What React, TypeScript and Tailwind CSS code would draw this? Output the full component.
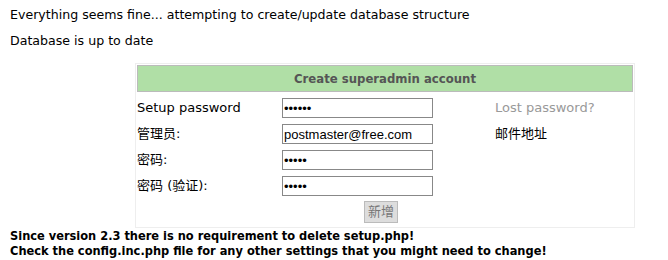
export default function App() {
  const rows = [
    { label: "Setup password", value: "123456", type: "password", note: "Lost password?", noteClass: "text-[#999]" },
    { label: "管理员:", value: "postmaster@free.com", type: "text", note: "邮件地址", noteClass: "text-black" },
    { label: "密码:", value: "12345", type: "password", note: "", noteClass: "" },
    { label: "密码 (验证):", value: "12345", type: "password", note: "", noteClass: "" },
  ];

  return (
    <main className="min-h-[260px] bg-white text-[13px] text-black font-['DejaVu_Sans','Noto_Sans_CJK_SC',sans-serif]">
      <div className="px-[10px] pt-[7px] text-[12.6px]">
        <p className="leading-[16px]">Everything seems fine... attempting to create/update database structure</p>
        <p className="mt-[10px] leading-[16px]">Database is up to date</p>
      </div>

      {/* setup form */}
      <div className="ml-[135px] mt-[14px] w-[500px] border border-[#eee] p-px">
        <div className="h-[27px] border border-[#bbb] bg-[#b0dfa6] text-center font-['DejaVu_Sans_Condensed','DejaVu_Sans',sans-serif] font-bold leading-[25px] text-[#555]">
          Create superadmin account
        </div>
        <div className="pt-[3px]">
          {rows.map((r) => (
            <div key={r.label} className="grid h-[26px] grid-cols-[145px_213px_1fr] items-center">
              <span>{r.label}</span>
              <input
                type={r.type}
                defaultValue={r.value}
                className="h-[20px] w-[151px] border border-[#888] px-[1px] text-[13px] font-['Liberation_Sans',sans-serif] outline-none"
              />
              <span className={r.noteClass}>{r.note}</span>
            </div>
          ))}
          <div className="flex h-[27px] items-start justify-center pt-[2px]">
            <button className="ml-[-8px] h-[22px] w-[34px] border border-[#bbb] bg-[#ddd] text-[13px] leading-[20px] text-[#777]">
              新增
            </button>
          </div>
        </div>
      </div>

      <div className="px-[10px] font-['DejaVu_Sans_Condensed','DejaVu_Sans',sans-serif] text-[12.7px] font-bold leading-[15px]">
        <div>Since version 2.3 there is no requirement to delete setup.php!</div>
        <div>Check the config.inc.php file for any other settings that you might need to change!</div>
      </div>
    </main>
  );
}
